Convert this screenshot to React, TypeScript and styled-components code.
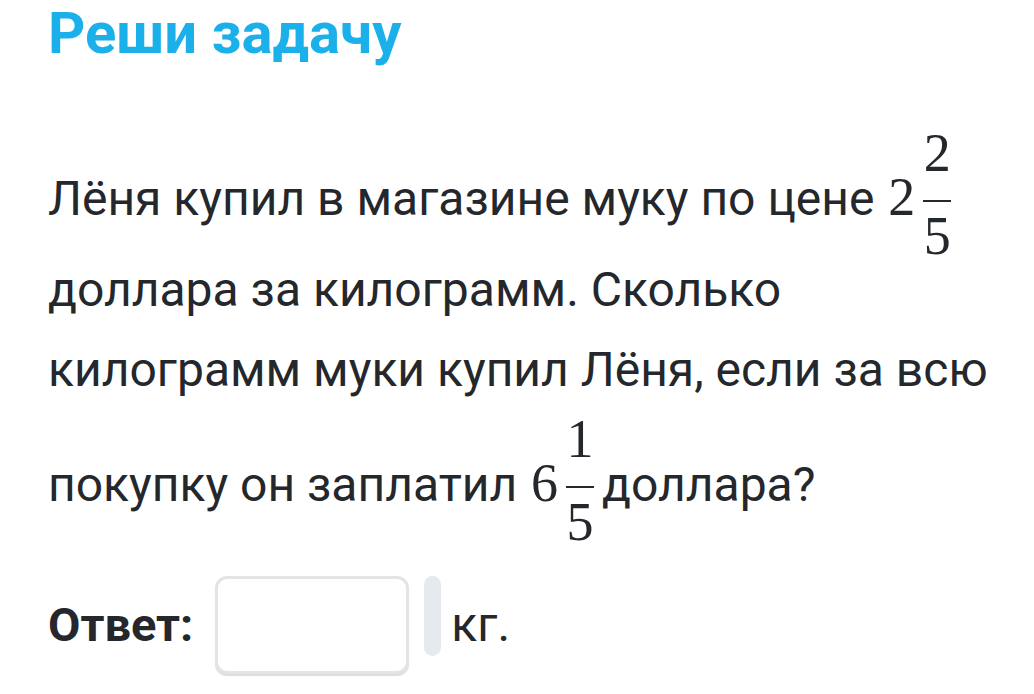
import React from "react";
import styled, { createGlobalStyle } from "styled-components";

const GlobalStyle = createGlobalStyle`
  html, body {
    margin: 0;
    padding: 0;
    background: #ffffff;
  }
  body {
    font-family: Roboto, "Noto Sans", sans-serif;
    color: #24272b;
  }
`;

const Page = styled.div`
  width: 1034px;
  height: 694px;
  padding: 0 0 0 48px;
  box-sizing: border-box;
  overflow: hidden;
`;

const Title = styled.h1`
  margin: 0;
  font-size: 58px;
  line-height: 66px;
  font-weight: 700;
  color: #1bb0ea;
`;

const Task = styled.div`
  margin-top: 67px;
  font-size: 48px;
  line-height: 80px;
`;

const Line = styled.div<{ shift: number }>`
  margin-top: ${({ shift }) => shift}px;
  white-space: nowrap;
`;

const Whole = styled.span`
  font-family: "Liberation Serif", "DejaVu Serif", serif;
  font-size: 54px;
  margin-left: 2px;
`;

const Frac = styled.span`
  display: inline-block;
  vertical-align: -39px;
  margin: 0 8px 0 8px;
  text-align: center;
  font-family: "Liberation Serif", "DejaVu Serif", serif;
  font-size: 54px;
  line-height: 40px;
`;

const Num = styled.span`
  display: block;
  padding-bottom: 27px;
`;

const Bar = styled.span`
  display: block;
  width: 28px;
  height: 2px;
  background: #24272b;
`;

const Den = styled.span`
  display: block;
  padding-top: 14px;
`;

const AnswerRow = styled.div`
  display: flex;
  align-items: flex-start;
  margin-top: 34px;
`;

const Label = styled.span`
  font-size: 47px;
  font-weight: 700;
  line-height: 44px;
  margin-top: 27px;
  margin-right: 22px;
`;

const Input = styled.input`
  width: 194px;
  height: 98px;
  box-sizing: border-box;
  border: 3px solid #e4e4e4;
  border-radius: 12px;
  box-shadow: 0 2px 1px #dcdcdc;
  background: #ffffff;
  outline: none;
`;

const Handle = styled.div`
  width: 17px;
  height: 80px;
  margin-left: 15px;
  border-radius: 9px;
  background: #e6e9ed;
`;

const Unit = styled.span`
  font-size: 48px;
  line-height: 44px;
  margin-top: 27px;
  margin-left: 10px;
`;

const Fraction = ({ n, d }: { n: string; d: string }): JSX.Element => (
  <Frac>
    <Num>{n}</Num>
    <Bar />
    <Den>{d}</Den>
  </Frac>
);

const App = (): JSX.Element => {
  return (
    <Page>
      <GlobalStyle />
      <Title>Реши задачу</Title>
      <Task>
        <Line shift={0}>
          Лёня купил в магазине муку по цене <Whole>2</Whole>
          <Fraction n="2" d="5" />
        </Line>
        <Line shift={-6}>доллара за килограмм. Сколько</Line>
        <Line shift={0}>килограмм муки купил Лёня, если за всю</Line>
        <Line shift={9}>
          покупку он заплатил <Whole>6</Whole>
          <Fraction n="1" d="5" />
          доллара?
        </Line>
      </Task>
      <AnswerRow>
        <Label>Ответ:</Label>
        <Input />
        <Handle />
        <Unit>кг.</Unit>
      </AnswerRow>
    </Page>
  );
};

export default App;
